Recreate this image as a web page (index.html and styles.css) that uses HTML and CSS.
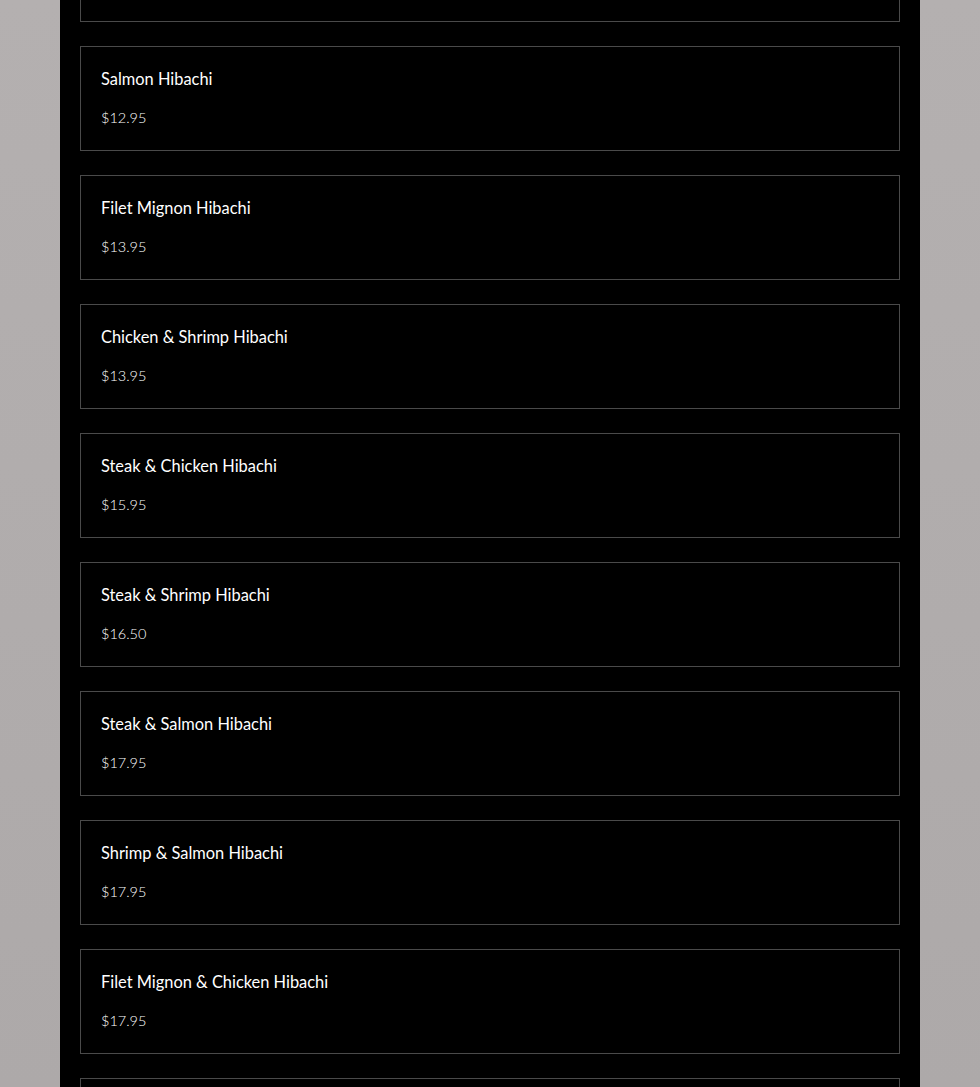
FILE: index.html
```html
<!DOCTYPE html>
<html lang="en">
<head>
    <meta charset="UTF-8">
    <meta name="viewport" content="width=device-width, initial-scale=1.0">
    <title>Hibachi Menu</title>
    <link rel="stylesheet" href="styles.css">
</head>
<body>
    <div class="menu">
        <div class="menu-list">
            <div class="menu-item">
                <div class="item-name">Shrimp Hibachi</div>
                <div class="item-price">$11.95</div>
            </div>
            <div class="menu-item">
                <div class="item-name">Salmon Hibachi</div>
                <div class="item-price">$12.95</div>
            </div>
            <div class="menu-item">
                <div class="item-name">Filet Mignon Hibachi</div>
                <div class="item-price">$13.95</div>
            </div>
            <div class="menu-item">
                <div class="item-name">Chicken &amp; Shrimp Hibachi</div>
                <div class="item-price">$13.95</div>
            </div>
            <div class="menu-item">
                <div class="item-name">Steak &amp; Chicken Hibachi</div>
                <div class="item-price">$15.95</div>
            </div>
            <div class="menu-item">
                <div class="item-name">Steak &amp; Shrimp Hibachi</div>
                <div class="item-price">$16.50</div>
            </div>
            <div class="menu-item">
                <div class="item-name">Steak &amp; Salmon Hibachi</div>
                <div class="item-price">$17.95</div>
            </div>
            <div class="menu-item">
                <div class="item-name">Shrimp &amp; Salmon Hibachi</div>
                <div class="item-price">$17.95</div>
            </div>
            <div class="menu-item">
                <div class="item-name">Filet Mignon &amp; Chicken Hibachi</div>
                <div class="item-price">$17.95</div>
            </div>
            <div class="menu-item">
                <div class="item-name">Filet Mignon &amp; Shrimp Hibachi</div>
                <div class="item-price">$18.95</div>
            </div>
        </div>
    </div>
</body>
</html>
```
FILE: styles.css
```css
html, body {
    height: 100%;
}
body {
    margin: 0;
    font-family: 'Lato', 'Noto Sans', sans-serif;
    background: linear-gradient(180deg, #b4b0b0 0%, #ada9a9 100%);
    overflow: hidden;
}
.menu {
    width: 860px;
    height: 100%;
    margin: 0 auto;
    padding: 0 20px;
    box-sizing: border-box;
    background: #000;
    overflow: hidden;
}
.menu-list {
    display: flex;
    flex-direction: column;
    gap: 24px;
    margin-top: -83px;
}
.menu-item {
    height: 105px;
    box-sizing: border-box;
    border: 1px solid #4a4a4a;
    padding: 20px 20px 0;
    color: #fff;
}
.item-name {
    font-size: 16.4px;
    line-height: 24px;
    margin-bottom: 17px;
}
.item-price {
    font-size: 14.5px;
    font-weight: 300;
    line-height: 20px;
    color: #fff;
}
```
